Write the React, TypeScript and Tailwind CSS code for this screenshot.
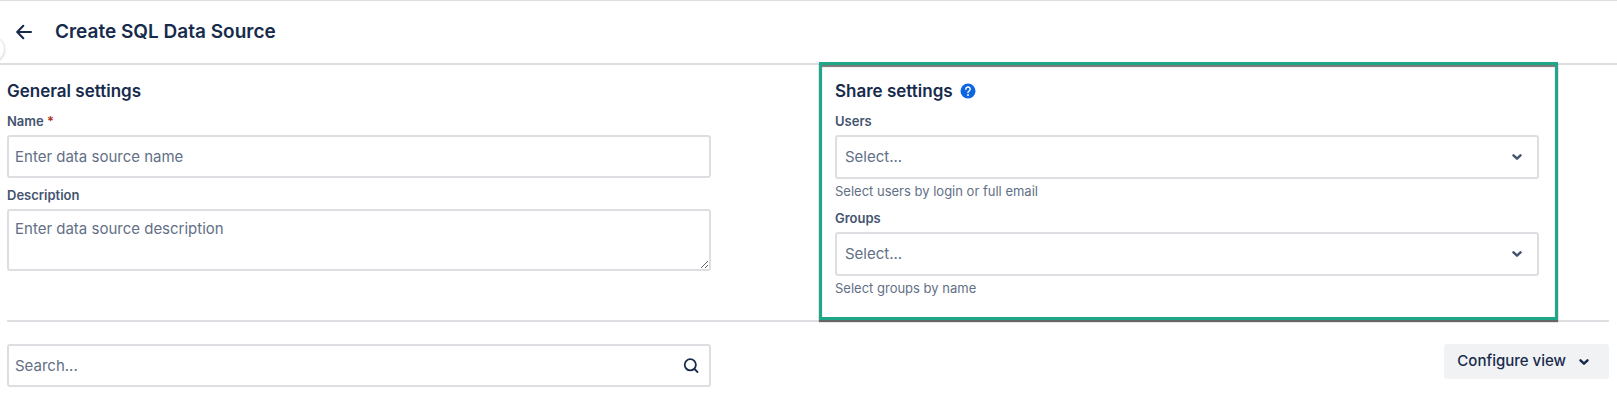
import type { ReactNode } from "react";

const fieldClass =
  "block w-full rounded-[3px] border-2 border-[#dddee1] bg-white text-[15px] text-[#626f86] outline-none placeholder:text-[#626f86] placeholder:opacity-100 focus:border-[#388bff]";

function Chevron({ className }: { className: string }) {
  return (
    <svg viewBox="0 0 24 24" className={className} fill="none" stroke="currentColor" strokeWidth="2.5" strokeLinecap="round" strokeLinejoin="round" aria-hidden="true">
      <path d="M8.5 10.4 12 13.6l3.5-3.2" />
    </svg>
  );
}

function Label({ htmlFor, children }: { htmlFor: string; children: ReactNode }) {
  return (
    <label htmlFor={htmlFor} className="block text-[13px] leading-4 font-semibold text-[#44546f]">
      {children}
    </label>
  );
}

function SelectField({ id, label, hint }: { id: string; label: string; hint: string }) {
  return (
    <div>
      <Label htmlFor={id}>{label}</Label>
      <div className="relative mt-1.5">
        <select id={id} defaultValue="" aria-describedby={`${id}-hint`} className={`${fieldClass} h-11 appearance-none pr-10 pl-2`}>
          <option value="">Select...</option>
        </select>
        <Chevron className="pointer-events-none absolute top-2.5 right-2.5 size-6 text-[#44546f]" />
      </div>
      <p id={`${id}-hint`} className="mt-1 text-[13px] leading-4 text-[#626f86]">
        {hint}
      </p>
    </div>
  );
}

export default function App() {
  return (
    <div className="relative min-h-screen overflow-hidden bg-white font-['Inter',sans-serif] text-[#172b4d]">
      <div className="absolute top-9 -left-[21px] size-[26px] rounded-full border border-[#e4e5e9] bg-white shadow-sm" />
      <header className="flex h-[65px] items-center gap-[19px] border-t border-b-2 border-[#dddee1] px-3">
        <button type="button" aria-label="Back" className="size-6">
          <svg viewBox="0 0 24 24" className="size-6" fill="none" stroke="currentColor" strokeWidth="2.1" strokeLinecap="round" strokeLinejoin="round" aria-hidden="true">
            <path d="M19 12H5.5M11.3 5.8 5.2 12l6.1 6.2" />
          </svg>
        </button>
        <h1 className="text-[19px] leading-6 font-semibold">Create SQL Data Source</h1>
      </header>

      <main className="pr-2 pl-[7px]">
        <div className="grid grid-cols-2 gap-x-[124px] border-b-2 border-[#dddee1] pt-3.5 pr-[70px] pb-6">
          <section>
            <h2 className="text-[17px] leading-6 font-semibold">General settings</h2>
            <div className="mt-2.5">
              <Label htmlFor="name">
                Name <span className="text-[#ae2e24]">*</span>
              </Label>
              <input id="name" type="text" required placeholder="Enter data source name" className={`${fieldClass} mt-1.5 h-[43px] px-1.5`} />
            </div>
            <div className="mt-[9px]">
              <Label htmlFor="description">Description</Label>
              <textarea id="description" placeholder="Enter data source description" className={`${fieldClass} mt-1.5 h-[62px] resize px-1.5 py-1.5 leading-6`} />
            </div>
          </section>

          <section className="relative">
            <div className="pointer-events-none absolute -top-[17px] -right-[19px] -bottom-6 -left-4 border-[3px] border-[#1fa78a] shadow-[0_2px_1px_#666,inset_0_2px_1px_#777]" />
            <div className="flex items-center gap-1.5">
              <h2 className="text-[17px] leading-6 font-semibold">Share settings</h2>
              <button type="button" aria-label="Help" className="size-[18px]">
                <svg viewBox="0 0 18 18" className="size-[18px]" fill="none" aria-hidden="true">
                  <circle cx="9" cy="9" r="7.5" fill="#0c66e4" />
                  <path d="M6.8 7.2a2.2 2.2 0 1 1 3.2 2c-.7.4-1 .7-1 1.4" stroke="white" strokeWidth="1.5" strokeLinecap="round" />
                  <circle cx="9" cy="12.9" r="1" fill="white" />
                </svg>
              </button>
            </div>
            <div className="mt-2.5 flex flex-col gap-[11px]">
              <SelectField id="users" label="Users" hint="Select users by login or full email" />
              <SelectField id="groups" label="Groups" hint="Select groups by name" />
            </div>
          </section>
        </div>

        <div className="flex items-start justify-between pt-[22px]">
          <div className="relative w-[calc(50%-97px)]">
            <input type="search" aria-label="Search" placeholder="Search..." className={`${fieldClass} h-[43px] pr-10 pl-1.5`} />
            <svg viewBox="0 0 24 24" className="pointer-events-none absolute top-2.5 right-2 size-6" fill="none" stroke="currentColor" strokeWidth="1.8" strokeLinecap="round" aria-hidden="true">
              <circle cx="11.3" cy="10.8" r="5.6" />
              <path d="m15.5 15 3 3" />
            </svg>
          </div>
          <button type="button" className="flex h-[35px] items-center gap-1.5 rounded-[3px] bg-[#f1f2f4] px-[13px] text-[15px] font-medium">
            Configure view
            <Chevron className="size-6" />
          </button>
        </div>
      </main>
    </div>
  );
}
